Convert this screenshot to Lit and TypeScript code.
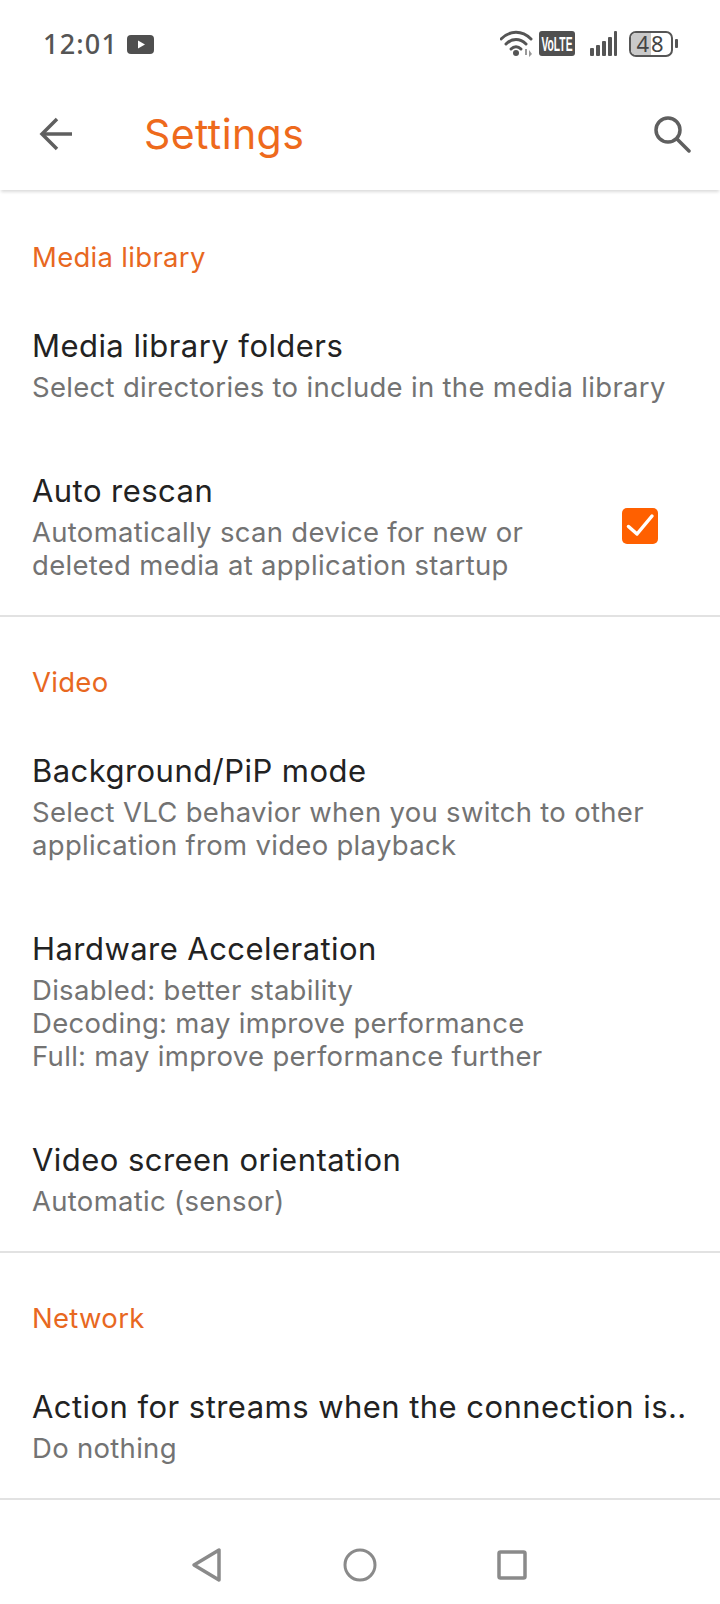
import { LitElement, html, css } from "lit";
import { customElement } from "lit/decorators.js";

const row = (title: string, subs: string[], trailing: unknown = null) => html`
  <div class="row">
    <div class="text">
      <div class="title">${title}</div>
      ${subs.map((s) => html`<div class="sub">${s}</div>`)}
    </div>
    ${trailing}
  </div>`;

@customElement("app-root")
export class AppRoot extends LitElement {
  static styles = css`
    :host { display: block; width: 720px; height: 1604px; background: #fff; overflow: hidden; font-family: "Inter", sans-serif; position: relative; }
    .status { height: 86px; display: flex; align-items: center; padding: 2px 42px 0 43px; box-sizing: border-box; color: #555; }
    .time { font-size: 27px; letter-spacing: 1.2px; line-height: 86px; font-family: "Noto Sans", sans-serif; font-weight: 500; }
    .yt { margin-left: 9px; }
    .spacer { flex: 1; }
    .status-icons { display: flex; align-items: center; }
    .appbar { height: 104px; display: flex; align-items: center; padding: 0 29px 8px 39px; box-sizing: border-box; box-shadow: 0 3px 3px -1px rgba(0,0,0,.14); position: relative; }
    .appbar h1 { margin: 0 0 0 71px; font-size: 41px; letter-spacing: 0.4px; font-weight: 400; color: #ee6a1c; flex: 1; line-height: 50px; }
    .section { padding-top: 48px; border-bottom: 2px solid #e2e2e2; }
    .section.first { margin-top: 2px; }
    .head { font-size: 27.5px; letter-spacing: 0.3px; line-height: 34px; padding: 0 32px 18px; color: #e8681f; }
    .row { padding: 33px 32px 33px; display: flex; align-items: center; }
    .text { flex: 1; min-width: 0; }
    .title { font-size: 31px; letter-spacing: 0.45px; line-height: 42px; margin-bottom: 4px; color: #222; white-space: nowrap; }
    .sub { font-size: 27.5px; letter-spacing: 0.3px; line-height: 33px; color: #737373; white-space: nowrap; }
    .check { width: 36px; height: 36px; border-radius: 5px; background: #ff6000; margin: 0 30px 0 0; flex: none; display: block; }
    .nav { position: absolute; left: 0; right: 0; bottom: 0; height: 78px; display: flex; justify-content: center; align-items: center; gap: 120px; }
    .nav svg { overflow: visible; }
  `;

  render() {
    return html`
      <div class="status">
        <span class="time">12:01</span>
        <svg class="yt" width="27" height="19" viewBox="0 0 27 19"><rect width="27" height="19" rx="4" fill="#4f4f4f"/><path d="M11 5.500l7 4-7 4z" fill="#fff"/></svg>
        <span class="spacer"></span>
        <svg class="status-icons" width="178" height="36" viewBox="0 -4 178 36">
          <g fill="none" stroke="#555" stroke-width="3" stroke-linecap="round">
            <path d="M1 9C10 0 22 0 31 9"/><path d="M6 14C12 8 20 8 26 14"/><path d="M11 19C14 16 18 16 21 19"/>
          </g>
          <circle cx="16" cy="23" r="3" fill="#555"/>
          <path d="M25 19v6h2v-6zM29 20v7l3-3z" fill="#999"/>
          <rect x="39" y="1" width="36" height="25" rx="3" fill="#505050"/>
          <text x="57" y="21" text-anchor="middle" font-family="Liberation Sans Narrow, Liberation Sans, sans-serif" font-size="20" font-weight="700" fill="#fff" textLength="31" lengthAdjust="spacingAndGlyphs">VoLTE</text>
          <g fill="#555"><rect x="90" y="18" width="4" height="8" rx="1"/><rect x="96" y="15" width="4" height="11" rx="1"/><rect x="102" y="11" width="4" height="15" rx="1"/><rect x="108" y="7" width="4" height="19" rx="1"/><rect x="114" y="1" width="3" height="25" rx="1"/></g>
          <rect x="130" y="2" width="42" height="24" rx="6" fill="#fff" stroke="#555" stroke-width="2"/>
          <path d="M131 8a5 5 0 0 1 5-5h15v22h-15a5 5 0 0 1-5-5z" fill="#c9c9c9"/>
          <text x="151" y="22" text-anchor="middle" font-family="Noto Sans, sans-serif" font-size="22" fill="#444" letter-spacing="2">48</text>
          <rect x="175" y="9" width="3" height="9" rx="1" fill="#555"/>
        </svg>
      </div>
      <div class="appbar">
        <svg width="34" height="34" viewBox="0 0 34 34" fill="none" stroke="#5f5f5f" stroke-width="3.500"><path d="M33 17H3"/><path d="M18 2L3 17l15 15"/></svg>
        <h1>Settings</h1>
        <svg width="38" height="38" viewBox="0 0 38 38" fill="none" stroke="#5f5f5f" stroke-width="3.500"><circle cx="15" cy="15" r="12"/><path d="M24 24l12 12" stroke-linecap="round"/></svg>
      </div>
      <div class="section first">
        <div class="head">Media library</div>
        ${row("Media library folders", ["Select directories to include in the media library"])}
        ${row("Auto rescan", ["Automatically scan device for new or", "deleted media at application startup"], html`
          <svg class="check" viewBox="0 0 36 36"><path d="M6.500 18.500L15 26L30 8" fill="none" stroke="#fff" stroke-width="3.500" stroke-linecap="round" stroke-linejoin="round"/></svg>`)}
      </div>
      <div class="section">
        <div class="head">Video</div>
        ${row("Background/PiP mode", ["Select VLC behavior when you switch to other", "application from video playback"])}
        ${row("Hardware Acceleration", ["Disabled: better stability", "Decoding: may improve performance", "Full: may improve performance further"])}
        ${row("Video screen orientation", ["Automatic (sensor)"])}
      </div>
      <div class="section">
        <div class="head">Network</div>
        ${row("Action for streams when the connection is..", ["Do nothing"])}
      </div>
      <div class="nav">
        <svg width="30" height="34" viewBox="0 0 30 34"><path d="M1 17L26 2v30z" fill="none" stroke="#8a8a8a" stroke-width="3.500" stroke-linejoin="round"/></svg>
        <svg width="34" height="34" viewBox="0 0 34 34"><circle cx="17" cy="17" r="15" fill="none" stroke="#8a8a8a" stroke-width="3"/></svg>
        <svg width="30" height="30" viewBox="0 0 30 30"><rect x="2" y="2" width="26" height="26" rx="1.500" fill="none" stroke="#8a8a8a" stroke-width="3.500"/></svg>
      </div>
    `;
  }
}
